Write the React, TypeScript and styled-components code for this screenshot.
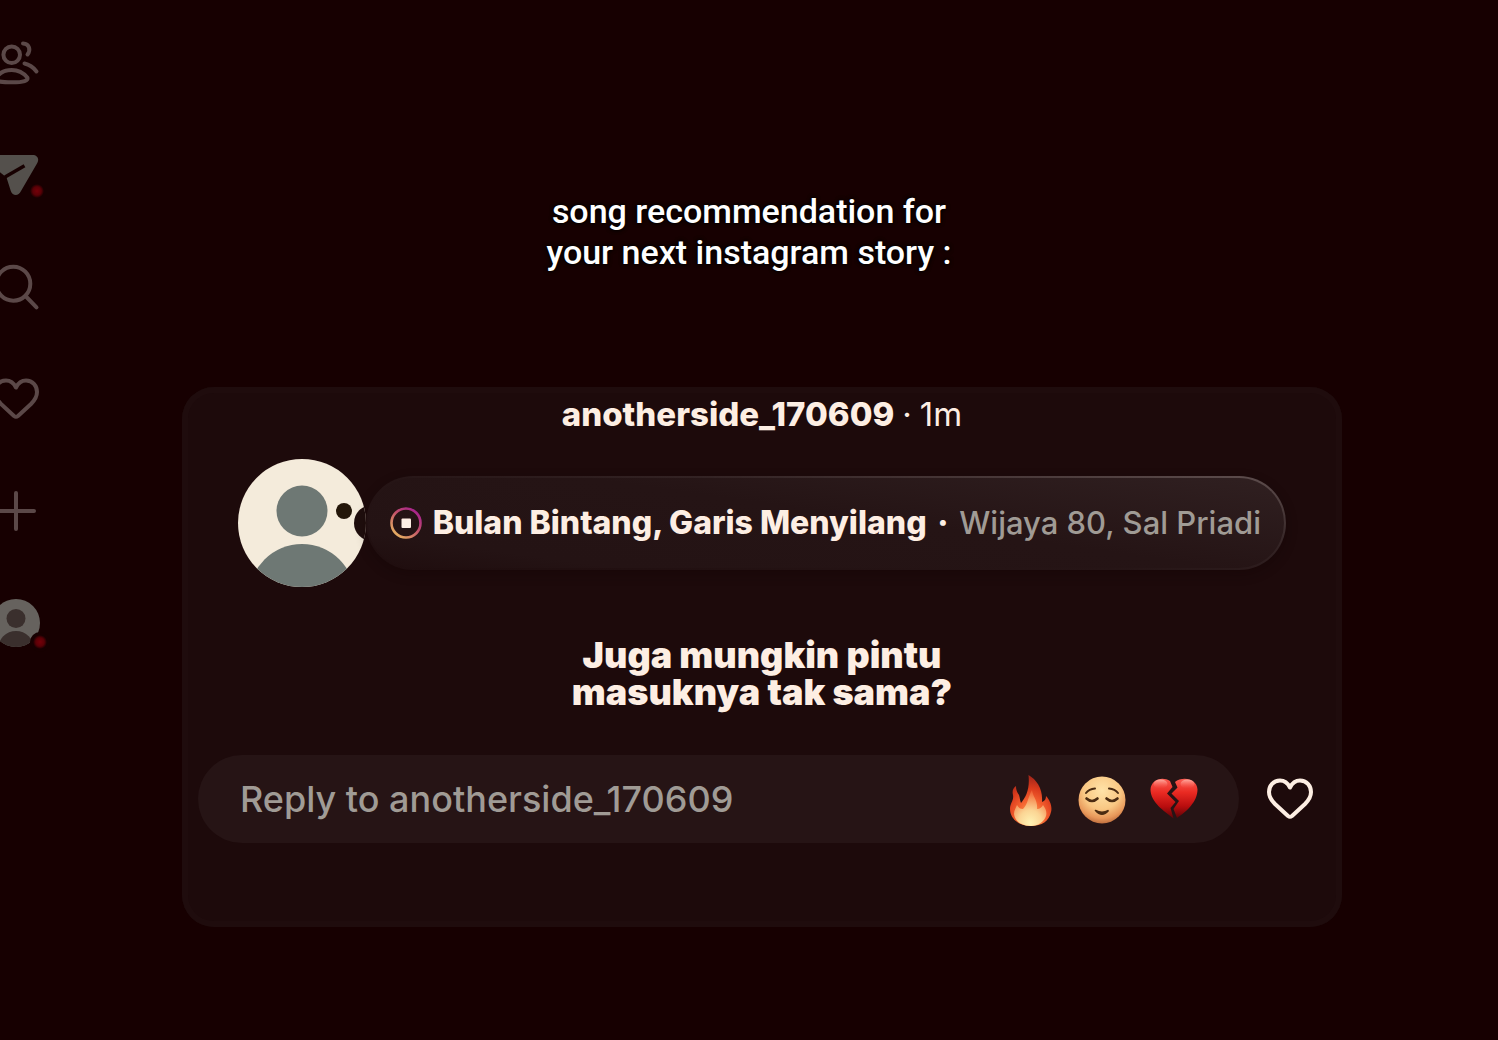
import React from "react";
import styled, { createGlobalStyle } from "styled-components";

const color = {
  page: "#170001",
  card: "#1d0a0b",
  cardEdge: "#1f0c0d",
  field: "#261415",
  cream: "#fdeee3",
  muted: "#a09b95",
  rail: "#5b4848",
  ink: "#231609",
};

const GlobalStyle = createGlobalStyle`
  * { box-sizing: border-box; }
  body {
    margin: 0;
    background: ${color.page};
    color: ${color.cream};
    font-family: Inter, "Noto Sans", sans-serif;
    overflow-x: hidden;
  }
  button, input { font: inherit; color: inherit; }
  h1, h2, p { margin: 0; }
`;

const Page = styled.div`
  display: flex;
  min-height: 100vh;
`;

const Rail = styled.nav`
  display: flex;
  flex-direction: column;
  gap: 64px;
  flex: none;
  width: 48px;
  margin-left: -8px;
  padding-top: 39px;
`;

const IconButton = styled.button<{ $tone: string }>`
  display: block;
  flex: none;
  width: 48px;
  height: 48px;
  padding: 0;
  border: 0;
  background: none;
  color: ${(p) => p.$tone};
  cursor: pointer;

  svg {
    display: block;
    width: 48px;
    height: 48px;
    overflow: visible;
  }
`;

const Main = styled.main`
  flex: 1;
  min-width: 0;
  margin-right: 40px;
  padding-top: 191px;
`;

const Caption = styled.h1`
  max-width: 440px;
  margin: 0 auto;
  color: #fff;
  font-family: Roboto, "Noto Sans", sans-serif;
  font-size: 34px;
  font-weight: 500;
  line-height: 41px;
  text-align: center;
  text-shadow: 0 0 4px #000, 0 0 4px #000;
`;

const Card = styled.article`
  margin: 114px 116px 0 142px;
  padding: 0 16px 84px;
  border-radius: 32px;
  background: ${color.card};
  box-shadow: inset 0 0 0 6px ${color.cardEdge};
`;

const CardHeader = styled.header`
  display: flex;
  justify-content: center;
  gap: 8px;
  font-size: 33px;
  line-height: 54px;
`;

const Author = styled.strong`
  font-weight: 800;
`;

const SongRow = styled.div`
  display: flex;
  align-items: center;
  margin: 18px 40px 0;
`;

const Avatar = styled.svg`
  display: block;
  flex: none;
  width: 128px;
  height: 128px;
`;

const SongPill = styled.div`
  display: flex;
  flex: 1;
  align-items: center;
  justify-content: space-between;
  min-width: 0;
  height: 94px;
  padding: 0 23px 0 22px;
  border: 2px solid transparent;
  border-radius: 47px;
  background:
    linear-gradient(8deg, #1f0d0e 0%, #241314 16%, #251415 55%, #302021 100%) padding-box,
    linear-gradient(7deg, #1f0d0e 0%, #261516 45%, #332324 65%, #5e4e4e 100%) border-box;
  box-shadow: 0 4px 12px rgba(16, 4, 4, 0.3);
  font-size: 32px;
  line-height: 40px;
  white-space: nowrap;
`;

const StopIcon = styled.svg`
  display: block;
  flex: none;
  width: 32px;
  height: 32px;
`;

const SongTitle = styled.strong`
  font-weight: 800;
`;

const Artist = styled.span`
  color: ${color.muted};
  font-size: 31px;
  font-weight: 500;
`;

const Question = styled.h2`
  max-width: 440px;
  margin: 50px auto 0;
  font-size: 36px;
  font-weight: 900;
  line-height: 37px;
  text-align: center;
`;

const ReplyRow = styled.form`
  display: flex;
  align-items: center;
  gap: 27px;
  margin-top: 44px;
  padding-right: 12px;
`;

const ReplyField = styled.div`
  display: flex;
  flex: 1;
  align-items: center;
  gap: 24px;
  min-width: 0;
  height: 88px;
  padding: 0 41px 0 42px;
  border-radius: 44px;
  background: ${color.field};
`;

const ReplyInput = styled.input`
  flex: 1;
  min-width: 0;
  height: 48px;
  padding: 0;
  border: 0;
  outline: 0;
  background: none;
  font-size: 36px;
  font-weight: 500;

  &::placeholder {
    color: ${color.muted};
    opacity: 1;
  }
`;

const HEART =
  "M24 12.5C21.5 7.5 18 5.5 14 5.5C7.5 5.5 3 10.5 3 17C3 21.5 5 25 9 29L22 41Q24 42.5 26 41L39 29C43 25 45 21.5 45 17C45 10.5 40.5 5.5 34 5.5C30 5.5 26.5 7.5 24 12.5Z";

const stroke = {
  fill: "none",
  stroke: "currentColor",
  strokeWidth: 4,
  strokeLinecap: "round" as const,
  strokeLinejoin: "round" as const,
};

const HeartIcon = () => (
  <svg viewBox="0 0 48 48" aria-hidden="true">
    <path d={HEART} {...stroke} />
  </svg>
);

const FriendsIcon = () => (
  <svg viewBox="0 0 48 48" aria-hidden="true">
    <g {...stroke}>
      <circle cx="19.7" cy="15.7" r="8.3" />
      <path d="M4 39.5C7 34 12 31 19.7 31C27 31 32 34.5 35.3 38.5C36.5 41.5 32 43.3 20 43.3C7 43.3 3 42 4 39.5Z" />
      <path d="M31 4.5C37.8 5 38.8 11.5 35.5 15.5" />
      <path d="M32.5 24.5C37.5 25.5 41.5 28.5 44.5 32.5" />
    </g>
  </svg>
);

const SendIcon = () => (
  <svg viewBox="0 0 48 48" aria-hidden="true">
    <defs>
      <radialGradient id="dot">
        <stop offset="0" stopColor="#740009" />
        <stop offset="0.6" stopColor="#5a0006" />
        <stop offset="1" stopColor={color.page} />
      </radialGradient>
    </defs>
    <path
      d="M6 4H40.5C45.5 4 47.5 8 45.3 12L29 40C26.5 45.5 20.5 45 18.8 40L14.5 26.5L3 17C-1 11 1 4 6 4Z"
      fill="#54504c"
    />
    <path d="M13 26L32.5 14.8" stroke={color.page} strokeWidth="3.5" />
    <circle cx="45" cy="40" r="7" fill="url(#dot)" />
  </svg>
);

const SearchIcon = () => (
  <svg viewBox="0 0 48 48" aria-hidden="true">
    <g {...stroke}>
      <circle cx="21.3" cy="20.7" r="17" />
      <path d="M33.5 33L44.5 44.3" />
    </g>
  </svg>
);

const PlusIcon = () => (
  <svg viewBox="0 0 48 48" aria-hidden="true">
    <path d="M24 6V42M6 24H42" {...stroke} />
  </svg>
);

const ProfileIcon = () => (
  <svg viewBox="0 0 48 48" aria-hidden="true">
    <clipPath id="profileClip">
      <circle cx="24" cy="24" r="24" />
    </clipPath>
    <g clipPath="url(#profileClip)">
      <rect width="48" height="48" fill="#66625e" />
      <circle cx="24" cy="19.5" r="9.5" fill="#3a2f2d" />
      <circle cx="24" cy="50" r="18" fill="#3a2f2d" />
    </g>
    <circle cx="48" cy="43" r="10" fill={color.page} />
    <circle cx="48" cy="43" r="7" fill="url(#dot)" />
  </svg>
);

const FireEmoji = () => (
  <svg viewBox="0 0 48 48" aria-hidden="true">
    <defs>
      <radialGradient id="fireOuter" cx="0.5" cy="0.85" r="0.8">
        <stop offset="0" stopColor="#ffb45c" />
        <stop offset="0.45" stopColor="#f4602f" />
        <stop offset="0.75" stopColor="#d93a1c" />
        <stop offset="1" stopColor="#a8281a" />
      </radialGradient>
      <radialGradient id="fireInner" cx="0.5" cy="0.92" r="0.9">
        <stop offset="0" stopColor="#fff3b4" />
        <stop offset="0.4" stopColor="#fbd594" />
        <stop offset="0.75" stopColor="#f6945a" />
        <stop offset="1" stopColor="#ee5a30" />
      </radialGradient>
    </defs>
    <path
      d="M25 51C12 51 4 43 4 34C4 28 8 26 7 20C6 16 7 13 10 11C10 15 11 17 13 20C14 23 14 26 15 28C20 22 24 14 22.5 0C31 5 37 14 36 27C39 26 40 24 40 21C44 25 46.500 32 45 37C43 46 36 51 25 51Z"
      fill="url(#fireOuter)"
    />
    <path
      d="M25 51C15 51 9 46 8 39C8 35 10 33 11 30C13 33 14 34 17 34C22 29 22 22 26 15C27 22 32 26 31 34C34 34 36 32 37 30C40 34 41 37 40 41C38 47 32 51 25 51Z"
      fill="url(#fireInner)"
    />
  </svg>
);

const RelievedEmoji = () => (
  <svg viewBox="0 0 48 48" aria-hidden="true">
    <defs>
      <radialGradient id="face" cx="0.5" cy="0.3" r="0.72">
        <stop offset="0" stopColor="#ffe3a8" />
        <stop offset="0.55" stopColor="#f9c783" />
        <stop offset="0.82" stopColor="#e8985a" />
        <stop offset="1" stopColor="#b9683a" />
      </radialGradient>
    </defs>
    <circle cx="24" cy="25" r="23.5" fill="url(#face)" />
    <g fill="none" stroke="#4b2c12" strokeLinecap="round">
      <path d="M8 18Q11 14 17 13.500M31 13.500Q37 14 40 18" strokeWidth="2" />
      <path d="M8.500 23.500Q14 28.500 19.500 23.500M28.500 23.500Q34 28.500 39.500 23.500" strokeWidth="2.600" />
      <path d="M17.500 35.500Q24 43 30.500 35.500Q24 39 17.500 35.500" strokeWidth="1.600" fill="#4b2c12" />
    </g>
  </svg>
);

const BrokenHeartEmoji = () => (
  <svg viewBox="0 0 48 48" aria-hidden="true">
    <defs>
      <linearGradient id="broken" x1="0" y1="0" x2="0" y2="1">
        <stop offset="0" stopColor="#fb5c52" />
        <stop offset="0.35" stopColor="#e92a22" />
        <stop offset="0.7" stopColor="#b90d0e" />
        <stop offset="1" stopColor="#5c0407" />
      </linearGradient>
      <linearGradient id="shine" x1="0" y1="0" x2="0" y2="1">
        <stop offset="0" stopColor="#ffb3a8" stopOpacity="0.9" />
        <stop offset="1" stopColor="#fb5c52" stopOpacity="0" />
      </linearGradient>
    </defs>
    <path
      d="M20 6C13 1 1 4 0.5 14.5C0.5 27 14 36 23.5 43.5L20.5 33L25.5 27L17 18.5L22.5 12Z"
      fill="url(#broken)"
    />
    <path
      d="M25 7C32 1 47 3 47.5 14.5C47.5 27 36 37 27 43L23.5 34L29 26L21.5 18.5L27.5 12.5Z"
      fill="url(#broken)"
    />
    <ellipse cx="10.5" cy="9" rx="7" ry="4.5" fill="url(#shine)" />
    <ellipse cx="37.5" cy="9" rx="7" ry="4.5" fill="url(#shine)" />
  </svg>
);

const railItems = [
  { label: "Friends", Icon: FriendsIcon },
  { label: "Messages", Icon: SendIcon },
  { label: "Search", Icon: SearchIcon },
  { label: "Likes", Icon: HeartIcon },
  { label: "Create", Icon: PlusIcon },
  { label: "Profile", Icon: ProfileIcon },
];

const reactions = [
  { label: "Fire", Icon: FireEmoji },
  { label: "Relieved face", Icon: RelievedEmoji },
  { label: "Broken heart", Icon: BrokenHeartEmoji },
];

export default function App() {
  return (
    <>
      <GlobalStyle />
      <Page>
        <Rail aria-label="Main">
          {railItems.map(({ label, Icon }) => (
            <IconButton key={label} type="button" aria-label={label} $tone={color.rail}>
              <Icon />
            </IconButton>
          ))}
        </Rail>
        <Main>
          <Caption>song recommendation for your next instagram story :</Caption>
          <Card>
            <CardHeader>
              <Author>anotherside_170609</Author>
              <span>·</span>
              <span>1m</span>
            </CardHeader>
            <SongRow>
              <Avatar viewBox="0 0 128 128" role="img" aria-label="Profile picture">
                <clipPath id="avatarClip">
                  <circle cx="64" cy="64" r="64" />
                </clipPath>
                <g clipPath="url(#avatarClip)">
                  <rect width="128" height="128" fill="#f4ebdb" />
                  <circle cx="64" cy="52" r="25.5" fill="#6e7874" />
                  <circle cx="64" cy="138" r="53" fill="#6e7874" />
                  <circle cx="106" cy="52" r="8" fill={color.ink} />
                  <circle cx="134" cy="64" r="18" fill="#1f0e0d" />
                </g>
              </Avatar>
              <SongPill>
                <StopIcon viewBox="0 0 32 32" role="img" aria-label="Stop">
                  <defs>
                    <linearGradient id="ring" x1="0.85" y1="0.1" x2="0.2" y2="0.9">
                      <stop offset="0" stopColor="#a8248c" />
                      <stop offset="0.45" stopColor="#c2506a" />
                      <stop offset="1" stopColor="#e3a862" />
                    </linearGradient>
                  </defs>
                  <circle cx="16" cy="16" r="14.5" fill="none" stroke="url(#ring)" strokeWidth="2.6" />
                  <rect x="11.5" y="11.5" width="9.5" height="9.5" rx="1" fill={color.cream} />
                </StopIcon>
                <SongTitle>Bulan Bintang, Garis Menyilang</SongTitle>
                <SongTitle>·</SongTitle>
                <Artist>Wijaya 80, Sal Priadi</Artist>
              </SongPill>
            </SongRow>
            <Question>Juga mungkin pintu masuknya tak sama?</Question>
            <ReplyRow onSubmit={(e) => e.preventDefault()}>
              <ReplyField>
                <ReplyInput
                  type="text"
                  aria-label="Reply to anotherside_170609"
                  placeholder="Reply to anotherside_170609"
                />
                {reactions.map(({ label, Icon }) => (
                  <IconButton key={label} type="button" aria-label={label} $tone={color.cream}>
                    <Icon />
                  </IconButton>
                ))}
              </ReplyField>
              <IconButton type="button" aria-label="Like" $tone={color.cream}>
                <HeartIcon />
              </IconButton>
            </ReplyRow>
          </Card>
        </Main>
      </Page>
    </>
  );
}
